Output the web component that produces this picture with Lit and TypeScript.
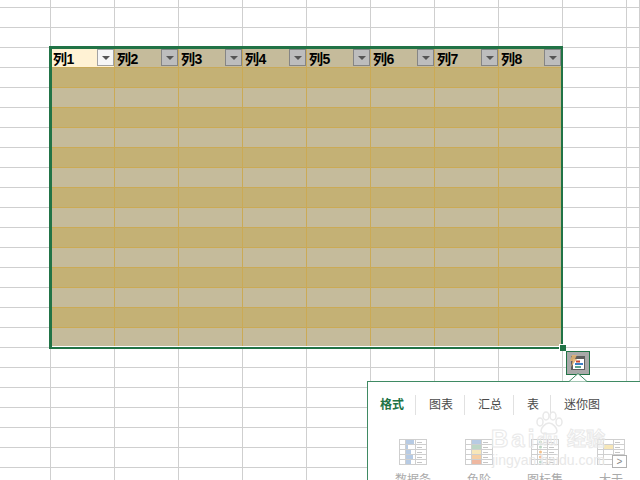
import { LitElement, html, css, svg } from "lit";
import { customElement } from "lit/decorators.js";

const CELL_COUNT = 11 * 25;
const HEAD = [1, 2, 3, 4, 5, 6, 7, 8];
const ROWS = Array.from({ length: 14 }, (_, i) => i);

@customElement("app-root")
export class AppRoot extends LitElement {
  static styles = css`
    :host { display: block; position: relative; width: 640px; height: 480px; overflow: hidden; background: #fff; font-family: "Liberation Sans", "Noto Sans CJK SC", sans-serif; }
    .sheet { display: grid; grid-template-columns: 51px repeat(9, 64px) 13px; grid-template-rows: 8px; grid-auto-rows: 20px; }
    .cell { box-sizing: border-box; border-right: 1px solid #cfcfcf; border-bottom: 1px solid #cfcfcf; }
    .table { position: absolute; left: 49px; top: 46px; width: 514px; height: 303px; box-sizing: border-box; border-style: solid; border-color: #217346; border-width: 3px 2px 2px 3px; background: #fff; display: grid; grid-template-columns: 63px repeat(6, 64px) 62px; grid-template-rows: 19px repeat(13, 20px) 18px; }
    .h { box-sizing: border-box; background: #c5bb9b; border-right: 1px solid #c9aa5a; border-bottom: 1px solid #c9aa5a; display: flex; align-items: center; justify-content: space-between; padding: 0 0 1px 2px; color: #000; font-weight: bold; }
    .h.active { background: #fff2d4; padding-left: 1px; }
    .h.last, .d.last { border-right: 0; }
    .h span { display: block; font-size: 14px; letter-spacing: -0.5px; }
    .fb { box-sizing: border-box; width: 17px; height: 17px; border: 1px solid #858585; background: #bdbdbd; display: flex; align-items: center; justify-content: center; }
    .active .fb { background: #f6f6f6; border-color: #a3a3a3; }
    .fb i { display: block; width: 0; height: 0; border-left: 4px solid transparent; border-right: 4px solid transparent; border-top: 4px solid #555; }
    .d { box-sizing: border-box; border-right: 1px solid #cbaa55; border-bottom: 1px solid #cbaa55; }
    .d.a { background: #c4b175; }
    .d.b { background: #c5bb9b; }
    .d.end { border-bottom: 0; }
    .handle { position: absolute; left: 559px; top: 344px; width: 6px; height: 6px; background: #217346; border-left: 1px solid #fff; border-top: 1px solid #fff; }
    .qa { position: absolute; left: 566px; top: 351px; width: 24px; height: 24px; box-sizing: border-box; border: 1px solid #217346; background: #a9a9a9; }
    .qa svg { display: block; }
    .panel { position: absolute; left: 367px; top: 381px; width: 290px; height: 120px; box-sizing: border-box; background: #fff; border: 1px solid #3f8a63; }
    .notch { position: absolute; left: 569px; top: 373px; display: block; }
    .tabs { display: flex; align-items: center; padding: 13px 0 0 12px; font-size: 12px; color: #4a4a4a; }
    .tabs div { height: 20px; line-height: 20px; }
    .tab { padding-right: 11px; margin-right: 13px; border-right: 1px solid #e1e1e1; }
    .tab.on { color: #217346; font-weight: bold; }
    .tab.end { border: 0; }
    .items { display: flex; margin-top: 24px; margin-left: 12px; }
    .item { width: 66px; flex: none; display: flex; flex-direction: column; align-items: center; color: #aaa; font-size: 12px; }
    .item svg { display: block; margin-bottom: 7px; }
    .item b { font-weight: normal; white-space: nowrap; line-height: 16px; }
    .arrow { position: absolute; left: 612px; top: 455px; width: 15px; height: 13px; box-sizing: border-box; border: 1px solid #b0b0b0; background: #fff; color: #888; font-size: 10px; line-height: 10px; display: flex; align-items: center; justify-content: center; }
    .wm { position: absolute; color: transparent; -webkit-text-stroke: 1px #e9e9e9; white-space: nowrap; }
    .wm1 { left: 491px; top: 427px; font: bold 24px/24px "Liberation Sans", sans-serif; letter-spacing: 3px; }
    .wm4 { left: 537px; top: 431px; font: bold 17px/18px "Liberation Sans", sans-serif; }
    .wm2 { left: 567px; top: 426px; font: bold 19px/24px "Noto Sans CJK SC", sans-serif; }
    .wm3 { left: 492px; top: 453px; font: 14px/14px "Liberation Sans", sans-serif; color: #e8e8e8; -webkit-text-stroke: 0; }
    .paw { position: absolute; left: 535px; top: 411px; display: block; }
  `;

  icon(fills: string[], bars: number[], dots = false) {
    const lines = [0, 1, 2, 3, 4, 5];
    return html`<svg width="28" height="26" viewBox="0 0 28 26">
      ${[0, 1, 2, 3, 4].map((i) => svg`<rect x="6" y="${1 + i * 5}" width="${bars[i]}" height="4" fill="${fills[i]}"/>
        <line x1="18" y1="${3.5 + i * 5}" x2="23" y2="${3.5 + i * 5}" stroke="#c6c6c6"/>`)}
      ${lines.map((i) => svg`<line x1="0" x2="28" y1="${0.5 + i * 5}" y2="${0.5 + i * 5}" stroke="#cfcfcf"/>`)}
      <path d="M.5 0v26M6.5 0v26M16.5 0v26M27.5 0v26" stroke="#cfcfcf" fill="none"/>
      ${dots
        ? [0, 1, 2, 3, 4].map((i) => svg`<circle cx="9.5" cy="${3 + i * 5}" r="1.5" fill="${["#bcd6c5", "#bcd6c5", "#f3c08a", "#f3c08a", "#bcd6c5"][i]}"/>
          <line x1="12" x2="16" y1="${3.5 + i * 5}" y2="${3.5 + i * 5}" stroke="#d6d6d6"/>`)
        : ""}
    </svg>`;
  }

  render() {
    const blue = "#b7cbe4";
    const white = "#fff";
    return html`
      <div class="sheet">${Array.from({ length: CELL_COUNT }, () => html`<div class="cell"></div>`)}</div>
      <div class="table">
        ${HEAD.map((n) => html`<div class="h ${n === 1 ? "active" : ""} ${n === 8 ? "last" : ""}"><span>列${n}</span><div class="fb"><i></i></div></div>`)}
        ${ROWS.map((r) => HEAD.map((n) => html`<div class="d ${r % 2 ? "b" : "a"} ${n === 8 ? "last" : ""} ${r === 13 ? "end" : ""}"></div>`))}
      </div>
      <div class="handle"></div>
      <div class="qa">
        <svg width="22" height="22" viewBox="0 0 22 22">
          <rect x="4" y="4" width="14" height="14" fill="#5e5e5e"/>
          <rect x="6" y="7" width="11" height="10" fill="#fff"/>
          <rect x="9" y="8.5" width="4" height="2" fill="#c8492c"/>
          <rect x="8" y="11" width="8" height="2" fill="#3d7fc4"/>
          <rect x="8" y="14" width="6" height="2" fill="#5fa68d"/>
          <path d="M5 3h5L8 7h2l-6 8 1.500-6H3z" fill="#e0b273" opacity=".9"/>
        </svg>
      </div>
      <div class="panel">
        <div class="tabs">
          <div class="tab on">格式</div><div class="tab">图表</div><div class="tab">汇总</div><div class="tab">表</div><div class="tab end">迷你图</div>
        </div>
        <div class="items">
          <div class="item">${this.icon([blue, blue, blue, blue, blue], [9, 3, 6, 8, 6])}<b>数据条</b></div>
          <div class="item">${this.icon([blue, "#bcd6c5", "#f7e7b9", "#f6cfa4", "#efb8a1"], [10, 10, 10, 10, 10])}<b>色阶</b></div>
          <div class="item">${this.icon([white, white, white, white, white], [2, 2, 2, 2, 2], true)}<b>图标集</b></div>
          <div class="item">${this.icon([white, "#f7e7b9", white, white, white], [10, 10, 10, 10, 10])}<b>大于</b></div>
        </div>
      </div>
      <div class="arrow">&gt;</div>
      <svg class="notch" width="18" height="9" viewBox="0 0 18 9"><path d="M0 8.500 L9 .5 L18 8.500" fill="#fff" stroke="#3f8a63"/></svg>
      <div class="wm wm1">Bai</div>
      <div class="wm wm4">du</div>
      <div class="wm wm2">经验</div>
      <div class="wm wm3">jingyan.baidu.com</div>
      <svg class="paw" width="28" height="24" viewBox="0 0 28 24" fill="none" stroke="#e9e9e9" stroke-width="1.500">
        <ellipse cx="5" cy="11" rx="3" ry="4"/><ellipse cx="11" cy="5" rx="3" ry="4"/><ellipse cx="18" cy="5" rx="3" ry="4"/><ellipse cx="24" cy="11" rx="3" ry="4"/>
        <path d="M14 12c-4 0-8 5-8 8s3 3 8 3 8 0 8-3-4-8-8-8z"/>
      </svg>
    `;
  }
}
